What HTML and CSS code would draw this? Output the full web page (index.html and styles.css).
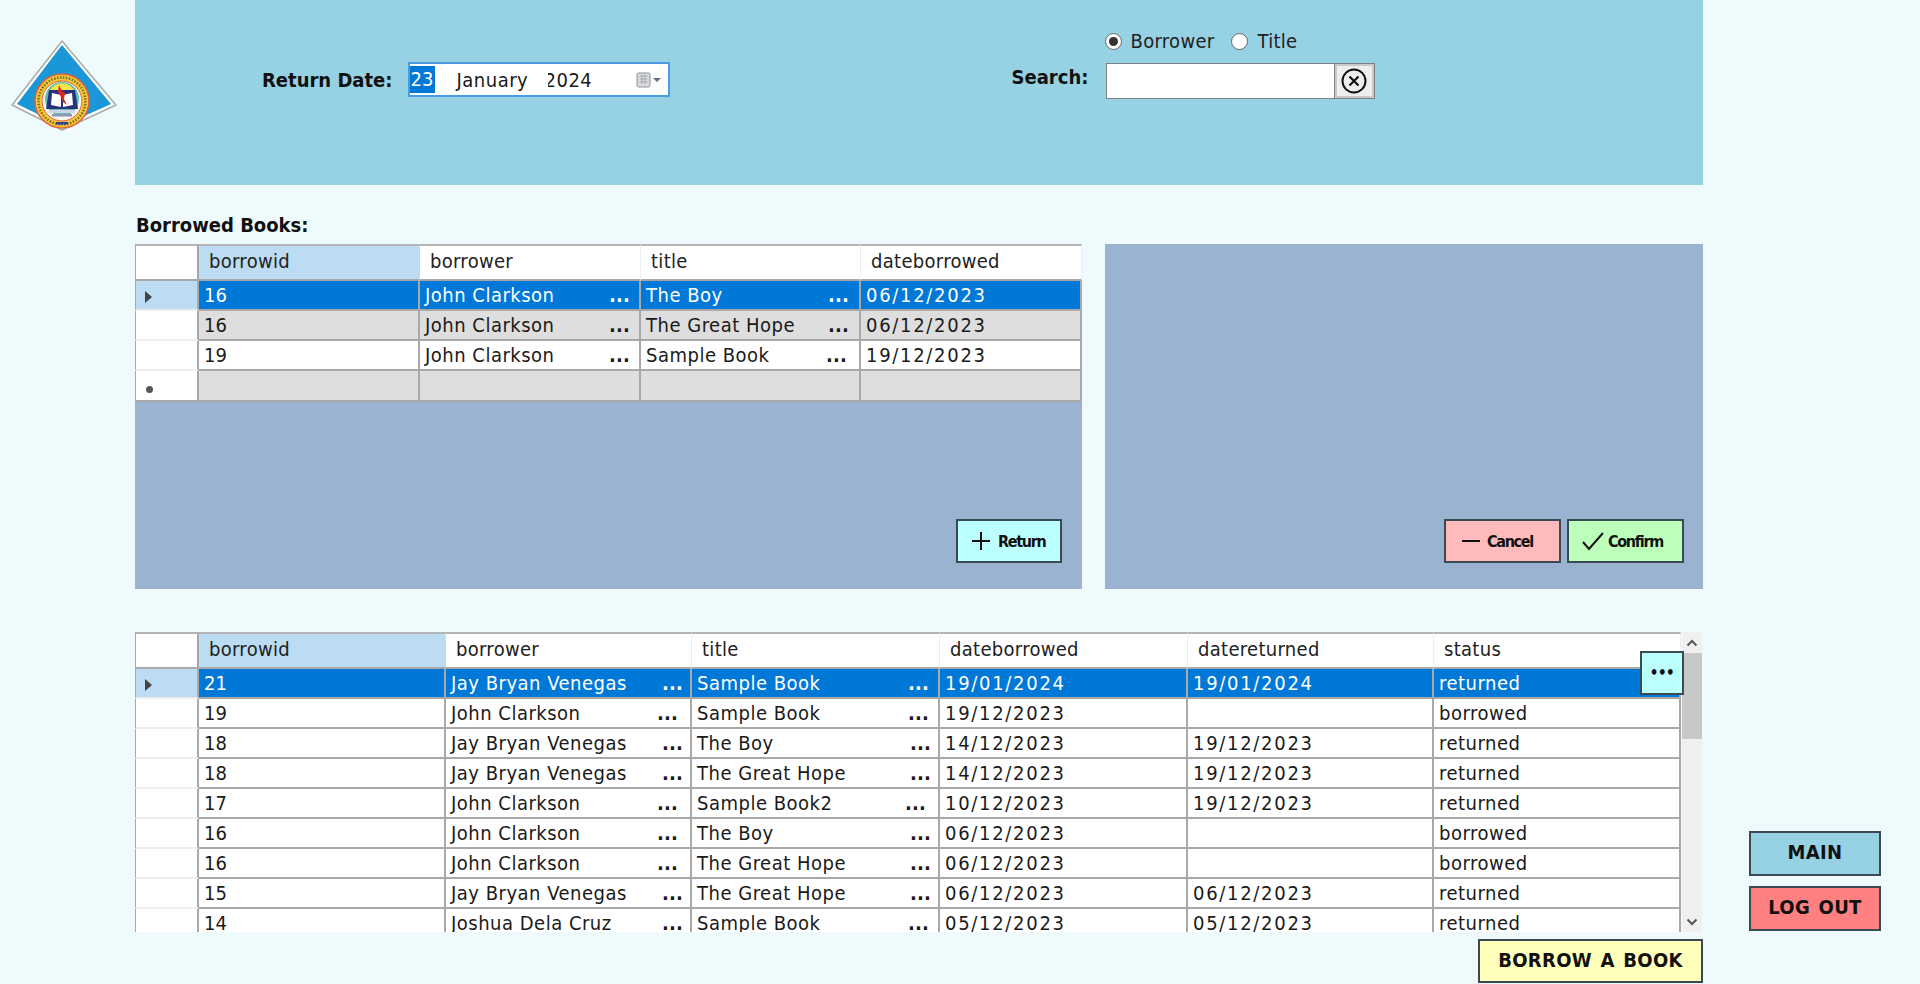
FILE: index.html
```html
<!DOCTYPE html>
<html lang="en">
<head>
<meta charset="utf-8">
<title>Return Books</title>
<link rel="stylesheet" href="styles.css">
</head>
<body>
<div class="app">
  <aside class="logo-col">
    <svg class="logo" viewBox="0 0 110 94" width="110" height="94" aria-hidden="true">
      <polygon points="53,2 107,66 53,91 3,66" fill="#fff" stroke="#aaa" stroke-width="1.5" stroke-linejoin="round"/>
      <polygon points="53,6 102,65 53,87 8,65" fill="#1b96d6"/>
      <circle cx="53" cy="62" r="27" fill="#f4c93a" stroke="#e2603a" stroke-width="1.5"/>
      <circle cx="53" cy="62" r="23.5" fill="none" stroke="#7a6a20" stroke-width="2.5" stroke-dasharray="1.5 1.5"/>
      <circle cx="53" cy="62" r="20" fill="#f6f6ee" stroke="#e2603a" stroke-width="1"/>
      <circle cx="53" cy="60" r="17" fill="#5fc0b0"/>
      <path d="M41 51a14 14 0 0 1 24 0z" fill="#f7e34c"/>
      <path d="M40 51h26l3 19H37z" fill="#27327e"/>
      <path d="M43 54l9 2v12l-10-2zM63 54l-9 2v12l10-2z" fill="#fff"/>
      <path d="M50 46l3 6 3 2-1 6 3 6-4-3-3-7-2-3z" fill="#d8281e"/>
      <rect x="40" y="71" width="26" height="3" fill="#cfd3e6"/>
      <rect x="43" y="75" width="20" height="2.5" fill="#8f96b8"/>
      <rect x="47" y="83" width="12" height="2.5" fill="#34409a"/>
    </svg>
  </aside>

  <main class="main-col">
    <header class="top-bar">
      <div class="date-group">
        <span class="label">Return Date:</span>
        <div class="date-box">
          <span class="date-day">23</span>
          <span class="date-month">January</span>
          <span class="date-year">2024</span>
          <svg class="cal-icon" viewBox="0 0 26 16" width="26" height="16" aria-hidden="true">
            <rect x="1" y="1" width="13" height="14" rx="1.5" fill="#d9dbdf" stroke="#8b8f96"/>
            <path d="M3.5 4h8M3.5 7h8M3.5 10h8M6 3v9M9 3v9" stroke="#a6a9af" stroke-width="1"/>
            <path d="M17 6h8l-4 4z" fill="#5d6f8a"/>
          </svg>
        </div>
      </div>
      <div class="search-group">
        <div class="radios">
          <span class="radio radio-on"></span><span class="radio-text">Borrower</span>
          <span class="radio"></span><span class="radio-text">Title</span>
        </div>
        <div class="search-row">
          <span class="label">Search:</span>
          <div class="search-box">
            <div class="search-input"></div>
            <div class="clear-btn">
              <svg viewBox="0 0 26 26" width="26" height="26" aria-hidden="true">
                <circle cx="13" cy="13" r="11.5" fill="none" stroke="#111" stroke-width="2"/>
                <path d="M8.500 8.500l9 9M17.500 8.500l-9 9" stroke="#111" stroke-width="2.200"/>
              </svg>
            </div>
          </div>
        </div>
      </div>
    </header>

    <h2 class="section-title">Borrowed Books:</h2>

    <section class="panels">
      <div class="panel panel-left">
        <table class="grid grid-top">
          <colgroup><col class="c-head"><col class="t1"><col class="t2"><col class="t3"><col class="t4"></colgroup>
          <thead><tr><th class="corner"></th><th class="sorted">borrowid</th><th>borrower</th><th>title</th><th>dateborrowed</th></tr></thead>
          <tbody>
            <tr class="sel"><td class="rh"><span class="tri"></span></td><td>16</td><td><div class="fld gap-t1"><span>John Clarkson</span><span>...</span></div></td><td><div class="fld gap-t2"><span>The Boy</span><span>...</span></div></td><td>06/12/2023</td></tr>
            <tr class="alt"><td class="rh"></td><td>16</td><td><div class="fld gap-t1"><span>John Clarkson</span><span>...</span></div></td><td><div class="fld gap-t2"><span>The Great Hope</span><span>...</span></div></td><td>06/12/2023</td></tr>
            <tr><td class="rh"></td><td>19</td><td><div class="fld gap-t1"><span>John Clarkson</span><span>...</span></div></td><td><div class="fld gap-t3"><span>Sample Book</span><span>...</span></div></td><td>19/12/2023</td></tr>
            <tr class="alt newrow"><td class="rh"><span class="star"></span></td><td></td><td></td><td></td><td></td></tr>
          </tbody>
        </table>
        <div class="panel-actions">
          <button class="btn btn-return" type="button">
            <svg viewBox="0 0 20 20" width="20" height="20" aria-hidden="true"><path d="M10 1v18M1 10h18" stroke="#111" stroke-width="2"/></svg>
            <span>Return</span>
          </button>
        </div>
      </div>
      <div class="panel panel-right">
        <div class="panel-actions">
          <button class="btn btn-cancel" type="button">
            <svg viewBox="0 0 20 20" width="20" height="20" aria-hidden="true"><path d="M1 10h18" stroke="#111" stroke-width="2"/></svg>
            <span>Cancel</span>
          </button>
          <button class="btn btn-confirm" type="button">
            <svg viewBox="0 0 22 20" width="22" height="20" aria-hidden="true"><path d="M1 11l6 7L21 2" fill="none" stroke="#111" stroke-width="2"/></svg>
            <span>Confirm</span>
          </button>
        </div>
      </div>
    </section>

    <section class="history">
      <div class="history-clip">
        <table class="grid grid-bottom">
          <colgroup><col class="c-head"><col class="b1"><col class="b2"><col class="b3"><col class="b4"><col class="b5"><col class="b6"></colgroup>
          <thead><tr><th class="corner"></th><th class="sorted">borrowid</th><th>borrower</th><th>title</th><th>dateborrowed</th><th>datereturned</th><th>status</th></tr></thead>
          <tbody>
            <tr class="sel"><td class="rh"><span class="tri"></span></td><td>21</td><td><div class="fld gap-b1"><span>Jay Bryan Venegas</span><span>...</span></div></td><td><div class="fld gap-b3"><span>Sample Book</span><span>...</span></div></td><td>19/01/2024</td><td>19/01/2024</td><td>returned</td></tr>
            <tr><td class="rh"></td><td>19</td><td><div class="fld gap-b2"><span>John Clarkson</span><span>...</span></div></td><td><div class="fld gap-b3"><span>Sample Book</span><span>...</span></div></td><td>19/12/2023</td><td></td><td>borrowed</td></tr>
            <tr><td class="rh"></td><td>18</td><td><div class="fld gap-b1"><span>Jay Bryan Venegas</span><span>...</span></div></td><td><div class="fld gap-b5"><span>The Boy</span><span>...</span></div></td><td>14/12/2023</td><td>19/12/2023</td><td>returned</td></tr>
            <tr><td class="rh"></td><td>18</td><td><div class="fld gap-b1"><span>Jay Bryan Venegas</span><span>...</span></div></td><td><div class="fld gap-b5"><span>The Great Hope</span><span>...</span></div></td><td>14/12/2023</td><td>19/12/2023</td><td>returned</td></tr>
            <tr><td class="rh"></td><td>17</td><td><div class="fld gap-b2"><span>John Clarkson</span><span>...</span></div></td><td><div class="fld gap-b4"><span>Sample Book2</span><span>...</span></div></td><td>10/12/2023</td><td>19/12/2023</td><td>returned</td></tr>
            <tr><td class="rh"></td><td>16</td><td><div class="fld gap-b2"><span>John Clarkson</span><span>...</span></div></td><td><div class="fld gap-b5"><span>The Boy</span><span>...</span></div></td><td>06/12/2023</td><td></td><td>borrowed</td></tr>
            <tr><td class="rh"></td><td>16</td><td><div class="fld gap-b2"><span>John Clarkson</span><span>...</span></div></td><td><div class="fld gap-b5"><span>The Great Hope</span><span>...</span></div></td><td>06/12/2023</td><td></td><td>borrowed</td></tr>
            <tr><td class="rh"></td><td>15</td><td><div class="fld gap-b1"><span>Jay Bryan Venegas</span><span>...</span></div></td><td><div class="fld gap-b5"><span>The Great Hope</span><span>...</span></div></td><td>06/12/2023</td><td>06/12/2023</td><td>returned</td></tr>
            <tr><td class="rh"></td><td>14</td><td><div class="fld gap-b1"><span>Joshua Dela Cruz</span><span>...</span></div></td><td><div class="fld gap-b3"><span>Sample Book</span><span>...</span></div></td><td>05/12/2023</td><td>05/12/2023</td><td>returned</td></tr>
          </tbody>
        </table>
      </div>
      <div class="scrollbar">
        <svg class="sb-arrow" viewBox="0 0 12 8" width="12" height="8" aria-hidden="true"><path d="M1.500 6.500L6 2l4.500 4.500" fill="none" stroke="#555" stroke-width="2"/></svg>
        <div class="sb-track"><div class="sb-thumb"></div></div>
        <svg class="sb-arrow" viewBox="0 0 12 8" width="12" height="8" aria-hidden="true"><path d="M1.500 1.500L6 6l4.500-4.500" fill="none" stroke="#555" stroke-width="2"/></svg>
      </div>
      <button class="more-btn" type="button">•••</button>
    </section>

    <div class="footer-row">
      <button class="big-btn btn-borrow" type="button">BORROW A BOOK</button>
    </div>
  </main>

  <aside class="side-col">
    <button class="big-btn btn-main" type="button">MAIN</button>
    <button class="big-btn btn-logout" type="button">LOG OUT</button>
  </aside>
</div>
</body>
</html>
```
FILE: styles.css
```css
* { box-sizing: border-box; }
html, body { margin: 0; height: 100%; }
body {
  background: #effafc;
  font-family: "DejaVu Sans Condensed", "DejaVu Sans", sans-serif;
  font-size: 20px;
  letter-spacing: 0.5px;
  color: #1a1a1a;
  overflow: hidden;
}
.app {
  display: grid;
  grid-template-columns: 135px 1568px 217px;
  width: 1920px;
  height: 984px;
}
.logo-col { padding: 39px 0 0 9px; }
.logo { display: block; }

.main-col { display: flex; flex-direction: column; }

.top-bar {
  height: 185px;
  flex: none;
  background: #96d1e4;
  display: flex;
}
.label { font-weight: 700; color: #111; font-size: 20px; letter-spacing: 0; }

.date-group {
  display: flex;
  align-items: center;
  gap: 15px;
  height: 35px;
  margin: 62px 0 0 127px;
}
.date-box {
  width: 262px;
  height: 35px;
  background: #fff;
  border: 2px solid #4a9be0;
  display: flex;
  align-items: center;
}
.date-day {
  background: #0078d7;
  color: #fff;
  width: 25px;
  height: 27px;
  line-height: 26px;
  text-align: center;
  letter-spacing: 0;
  margin-right: 22px;
}
.date-month { width: 91px; }
.date-year { width: 45px; overflow: hidden; text-indent: -3px; white-space: nowrap; }
.cal-icon { margin-left: 43px; }

.search-group {
  margin-left: 342px;
  padding-top: 29px;
  display: flex;
  flex-direction: column;
}
.radios {
  display: flex;
  align-items: center;
  height: 24px;
  margin-left: 93px;
}
.radio {
  width: 17px;
  height: 17px;
  border-radius: 50%;
  background: #fff;
  border: 1.500px solid #666;
  display: flex;
  align-items: center;
  justify-content: center;
}
.radio-on::after {
  content: "";
  width: 9px;
  height: 9px;
  border-radius: 50%;
  background: #333;
}
.radio-text { margin: 0 17px 0 9px; color: #222; letter-spacing: 0.3px; }
.search-row {
  display: flex;
  align-items: center;
  gap: 18px;
  margin-top: 10px;
}
.search-row .label { width: 76px; padding-bottom: 8px; }
.search-box { display: flex; height: 36px; }
.search-input {
  width: 228px;
  background: #fff;
  border: 1px solid #808080;
  border-right: 0;
}
.clear-btn {
  width: 41px;
  background: #eee;
  border: 3px solid #c9c9c9;
  outline: 1px solid #808080;
  outline-offset: -1px;
  display: flex;
  align-items: center;
  justify-content: center;
}

.section-title {
  flex: none;
  height: 59px;
  margin: 0;
  padding: 27px 0 0 1px;
  font-size: 20px;
  line-height: 27px;
  font-weight: 700;
  letter-spacing: 0;
  color: #111;
}

.panels {
  flex: none;
  height: 345px;
  display: grid;
  grid-template-columns: 947px 598px;
  gap: 23px;
}
.panel {
  background: #9ab3d1;
  display: flex;
  flex-direction: column;
  justify-content: space-between;
}
.panel-right { justify-content: flex-end; }
.panel-actions {
  display: flex;
  justify-content: flex-end;
  gap: 6px;
  padding: 0 19px 26px 0;
}
.panel-left .panel-actions { padding-right: 20px; }
.btn {
  height: 44px;
  border: 2px solid #3a4a55;
  display: flex;
  align-items: center;
  font-family: inherit;
  font-size: 16px;
  font-weight: 700;
  letter-spacing: -1.300px;
  color: #111;
  padding: 0;
}
.btn-return { width: 106px; background: #bbffff; gap: 7px; padding-left: 13px; }
.btn-cancel { width: 117px; background: #ffbbbb; gap: 6px; padding-left: 15px; }
.btn-confirm { width: 117px; background: #bbffbb; gap: 4px; padding-left: 13px; }

.grid {
  border-collapse: separate;
  border-spacing: 0;
  table-layout: fixed;
  background: #fff;
}
.grid-top { width: 947px; }
.grid-bottom { width: 1546px; }
.c-head { width: 64px; }
.t1, .t2, .t4 { width: 221px; }
.t3 { width: 220px; }
.b1, .b6 { width: 247px; }
.b2, .b5 { width: 246px; }
.b3, .b4 { width: 248px; }

.grid th {
  height: 37px;
  font-weight: 400;
  text-align: left;
  padding: 0 0 3px 10px;
  color: #222;
  background: #fff;
  letter-spacing: 0.300px;
  border-top: 2px solid #b4b4b4;
  border-bottom: 2px solid #a8a8a8;
  border-right: 1px solid #eee;
}
.grid th.corner { border-left: 1px solid #a8a8a8; border-right: 2px solid #a8a8a8; }
.grid th.sorted { background: #bbdcf3; border-right-color: #bbdcf3; }
.grid td {
  height: 30px;
  padding: 0 5px;
  line-height: 28px;
  border-right: 2px solid #a8a8a8;
  border-bottom: 2px solid #a8a8a8;
  white-space: nowrap;
  overflow: hidden;
  color: #1a1a1a;
}
.grid td:nth-child(2) { letter-spacing: 0; }
.grid-top td:nth-child(5),
.grid-bottom td:nth-child(5),
.grid-bottom td:nth-child(6) { letter-spacing: 1.700px; }
.grid td.rh {
  background: #fff;
  padding: 0 0 0 9px;
  border-left: 1px solid #a8a8a8;
  border-bottom: 2px solid #eee;
}
.grid .sel td { background: #0078d7; color: #fff; }
.grid .sel td.rh { background: #bbdcf3; }
.grid .alt td { background: #dedede; }
.grid .alt td.rh { background: #fff; }
.grid-top .newrow td { height: 31px; }
.grid-top .newrow td.rh { border-bottom-color: #a8a8a8; }

.tri {
  display: inline-block;
  width: 0;
  height: 0;
  border-left: 7px solid #444;
  border-top: 6px solid transparent;
  border-bottom: 6px solid transparent;
  vertical-align: middle;
}
.star {
  display: inline-block;
  width: 7px;
  height: 7px;
  border-radius: 50%;
  background: #555;
  vertical-align: 0;
  margin-left: 1px;
}
.fld { display: flex; justify-content: space-between; }
.fld span:last-child { font-weight: 700; letter-spacing: 0.200px; }
.gap-t1 { padding-right: 4px; }
.gap-t2 { padding-right: 5px; }
.gap-t3 { padding-right: 7px; }
.gap-b1 { padding-right: 2px; }
.gap-b2 { padding-right: 7px; }
.gap-b3 { padding-right: 4px; }
.gap-b4 { padding-right: 7px; }
.gap-b5 { padding-right: 2px; }

.history {
  flex: none;
  height: 300px;
  margin-top: 43px;
  display: flex;
  position: relative;
}
.history-clip { width: 1547px; height: 300px; overflow: hidden; }
.scrollbar {
  width: 20px;
  background: #f0f0f0;
  display: flex;
  flex-direction: column;
  align-items: center;
}
.sb-arrow { flex: none; margin: 7px 0 6px; }
.sb-track { flex: 1; width: 100%; }
.sb-thumb { width: 100%; height: 86px; background: #c8c8c8; }
.more-btn {
  position: absolute;
  left: 1505px;
  top: 19px;
  width: 44px;
  height: 44px;
  background: #bbffff;
  border: 2px solid #3a4a55;
  font-size: 15px;
  font-weight: 700;
  font-family: inherit;
  letter-spacing: -0.5px;
  padding: 0;
  color: #111;
}

.footer-row {
  display: flex;
  justify-content: flex-end;
  margin-top: 7px;
}
.big-btn {
  height: 45px;
  border: 2px solid #3a4a55;
  font-family: inherit;
  font-size: 20px;
  font-weight: 700;
  letter-spacing: 0.300px;
  word-spacing: 2px;
  color: #111;
  padding: 0 0 3px;
}
.btn-borrow { width: 225px; height: 44px; background: #ffffbb; }

.side-col {
  padding: 831px 0 0 46px;
  display: flex;
  flex-direction: column;
  gap: 10px;
}
.btn-main { width: 132px; background: #96d1e4; }
.btn-logout { width: 132px; background: #ff8080; }
```
